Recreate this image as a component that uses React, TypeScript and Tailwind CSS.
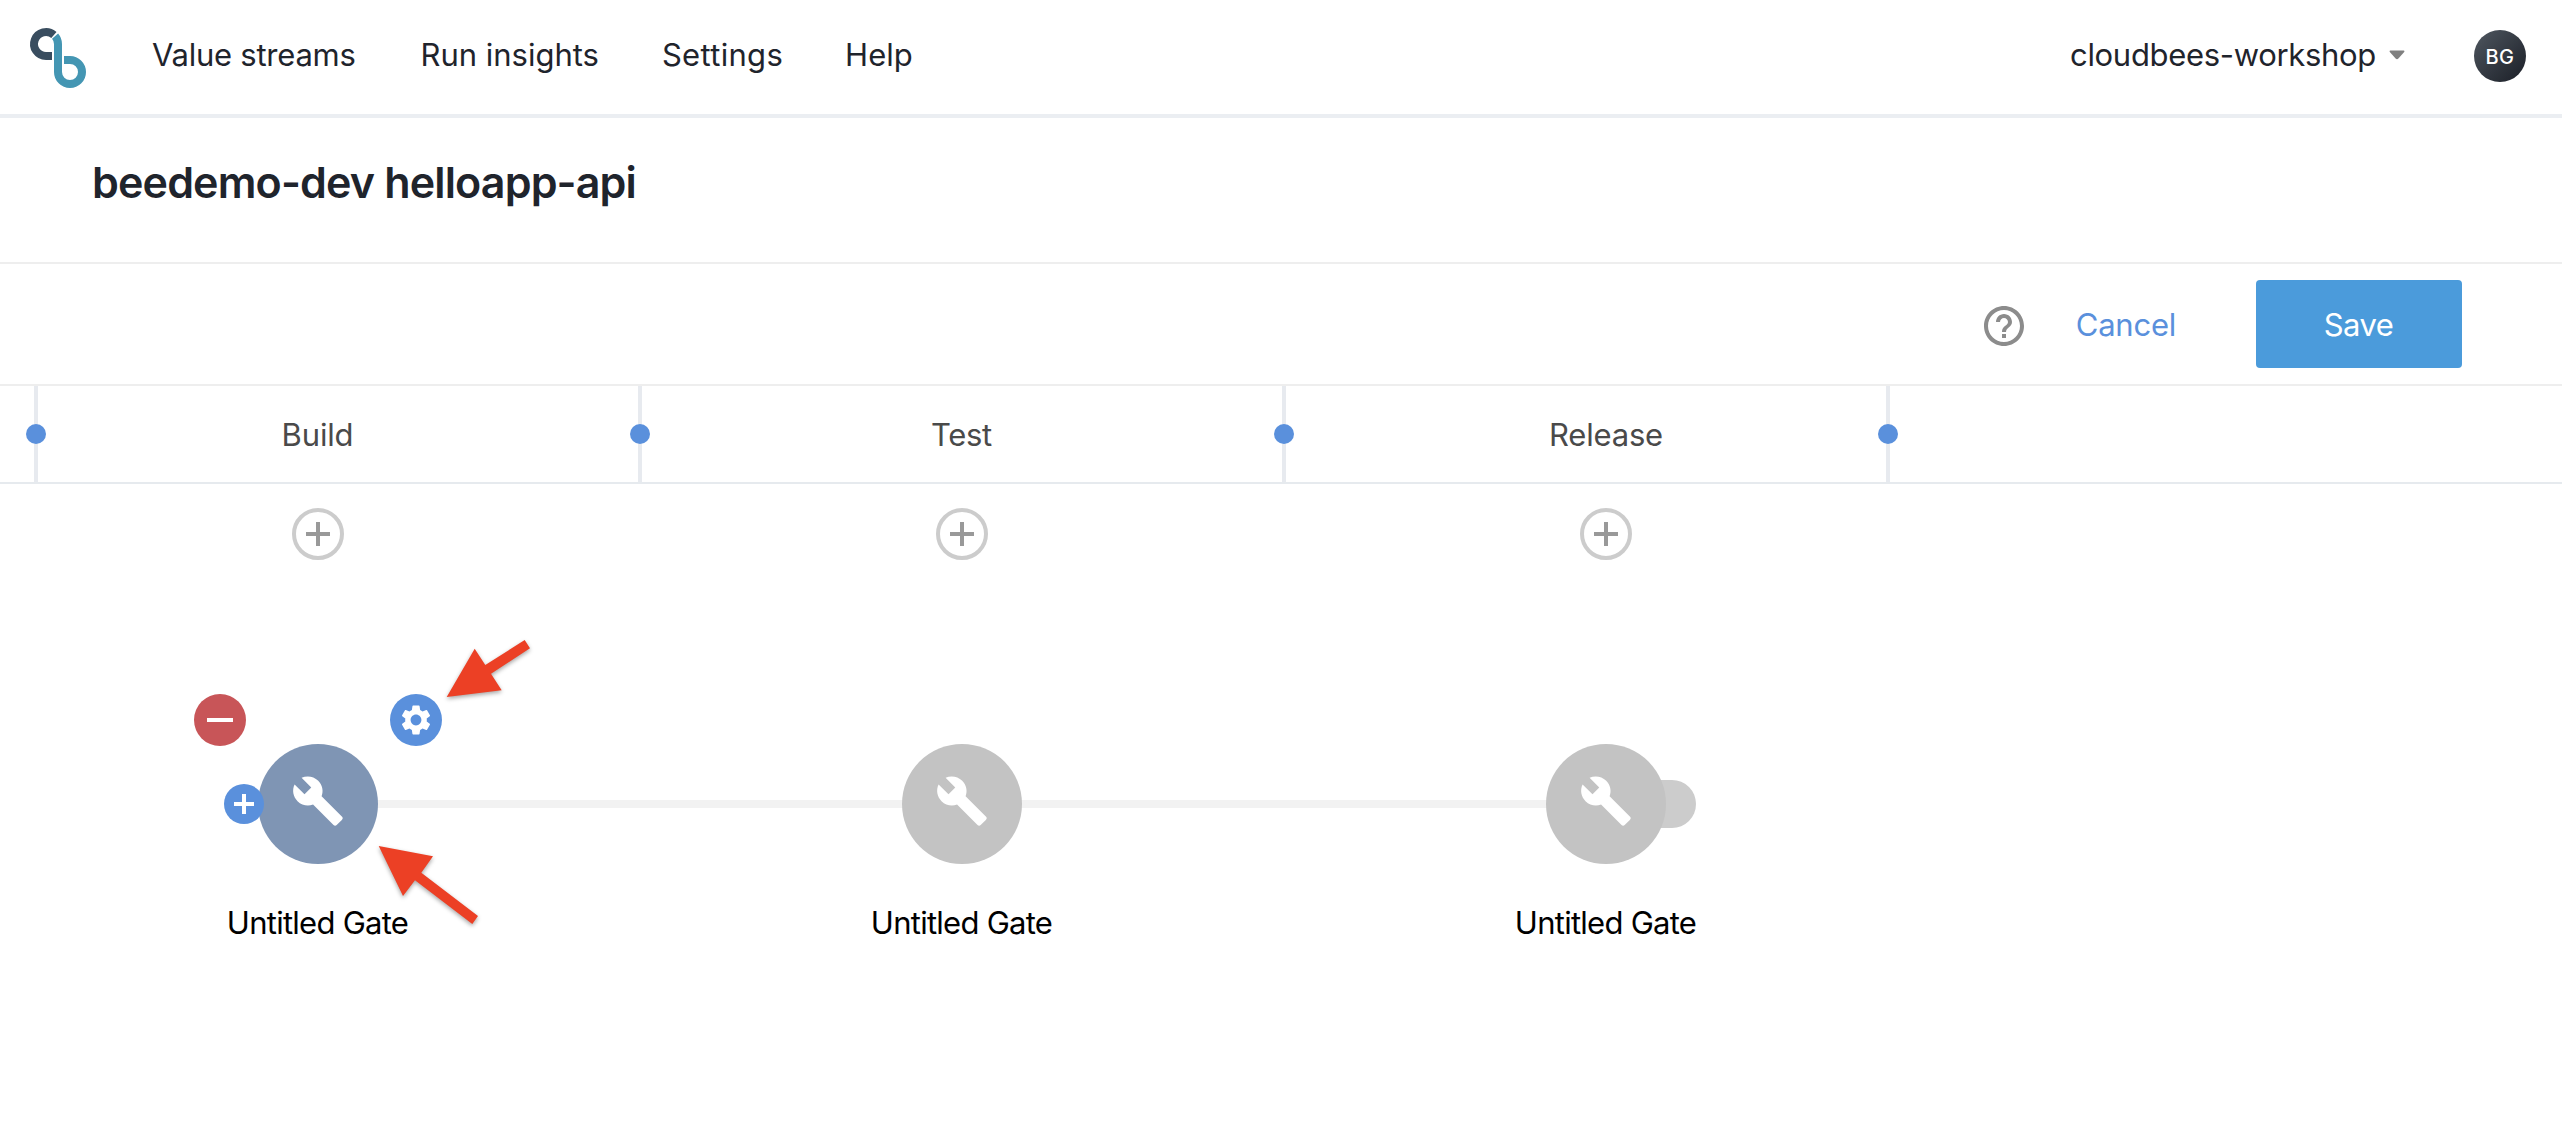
import { MdBuild, MdHelpOutline, MdSettings } from 'react-icons/md';

function Logo() {
  return (
    <svg viewBox="28 26 60 64" className="h-16 w-[60px] shrink-0" fill="none" strokeWidth="8">
      <path d="M52 56H46A12 12 0 1 1 53.9 34.95" stroke="#394d5f" />
      <path d="M64 60H70A12 12 0 1 1 58 72V44A12 12 0 0 0 55.06 36.13" stroke="#4496b3" />
    </svg>
  );
}

function Header() {
  return (
    <header className="flex h-[118px] items-center border-b-4 border-[#ebeef2] pl-7 pr-9 text-[31px] leading-[39px] text-[#1f242c]">
      <div className="mt-[2px]">
        <Logo />
      </div>
      <nav className="mb-[5px] ml-16 flex">
        <a className="mr-[65px] tracking-[-0.25px]">Value streams</a>
        <a className="mr-[63px] tracking-[-0.02px]">Run insights</a>
        <a className="mr-[62px] tracking-[0.311px]">Settings</a>
        <a className="tracking-[0.02px]">Help</a>
      </nav>
      <div className="mb-[5px] ml-auto flex items-center">
        <span className="tracking-[-0.318px]">cloudbees-workshop</span>
        <svg viewBox="0 0 16 10" className="ml-[13px] h-[10px] w-4" fill="#808080">
          <path d="M1.2 0.5H14.8Q16 0.8 15.2 2L9.4 8.6Q8 10 6.6 8.6L0.8 2Q0 0.8 1.2 0.5Z" />
        </svg>
      </div>
      <div className="mb-[2px] ml-[69px] flex size-[52px] items-center justify-center rounded-full bg-linear-to-br from-[#505861] to-[#1b1f27] text-[20px] font-medium leading-6 tracking-[0.4px] text-white">
        <span className="mt-px">BG</span>
      </div>
    </header>
  );
}

function Toolbar() {
  return (
    <div className="flex h-[122px] items-center justify-end border-b-2 border-[#eeeeee] pr-[100px] text-[31px] leading-[39px]">
      <MdHelpOutline className="mt-1 size-12 text-[#8c8c8c]" />
      <span className="ml-12 mt-px tracking-[-0.23px] text-[#5a90dc]">Cancel</span>
      <button className="ml-[80px] h-[88px] w-[206px] rounded-[4px] bg-[#4b9bdb] pr-px pt-px tracking-[-0.5px] text-white">
        Save
      </button>
    </div>
  );
}

function Divider({ side }: { side: string }) {
  return (
    <div className={`absolute inset-y-0 flex w-5 items-center justify-center ${side}`}>
      <div className="absolute inset-y-0 left-2 w-1 bg-[#e7eaef]" />
      <div className="relative size-5 rounded-full bg-[#5a90dc]" />
    </div>
  );
}

function StageHeader() {
  return (
    <div className="flex h-[98px] border-b-2 border-[#e6eaee] text-[31px] leading-[39px] text-[#4a4a4a]">
      <div className="-ml-1 flex">
        <div className="relative flex w-[644px] items-center justify-center">
          <Divider side="left-[30px]" />
          <span className="pr-px pt-px tracking-[-0.15px]">Build</span>
          <Divider side="-right-2.5" />
        </div>
        <div className="relative flex w-[644px] items-center justify-center">
          <span className="pr-px pt-px tracking-[-0.35px]">Test</span>
          <Divider side="-right-2.5" />
        </div>
        <div className="relative flex w-[644px] items-center justify-center">
          <span className="pt-px tracking-[-0.2px]">Release</span>
          <Divider side="right-[30px]" />
        </div>
      </div>
    </div>
  );
}

function Plus({ className }: { className: string }) {
  return (
    <svg viewBox="0 0 24 24" className={className} fill="currentColor">
      <rect x="10" width="4" height="24" />
      <rect y="10" width="24" height="4" />
    </svg>
  );
}

function Gate({ selected = false, linked = false, last = false }) {
  return (
    <div className="flex w-[644px] flex-col items-center">
      <div className="flex size-[52px] items-center justify-center rounded-full border-4 border-[#cccccc] text-[#999999]">
        <Plus className="size-6" />
      </div>
      <div className="relative mt-[184px] size-[120px]">
        {linked && <div className="absolute left-[60px] top-14 h-2 w-[644px] bg-[#f2f2f2]" />}
        {last && <div className="absolute left-[90px] top-9 h-12 w-[60px] rounded-r-full bg-[#cccccc]" />}
        <div
          className={`relative z-10 flex size-[120px] items-center justify-center rounded-full pb-[6px] pr-px text-white ${
            selected ? 'bg-[#7f95b4]' : 'bg-[#c3c3c3]'
          }`}
        >
          <MdBuild className="size-[54px]" />
        </div>
        {selected && (
          <>
            <div className="absolute -left-16 -top-[50px] z-10 flex size-[52px] items-center justify-center rounded-full bg-[#c85558]">
              <div className="h-1 w-[26px] bg-white" />
            </div>
            <div className="absolute -top-[50px] left-[132px] z-10 flex size-[52px] items-center justify-center rounded-full bg-[#5a90dc] text-white">
              <MdSettings className="size-9" />
            </div>
            <div className="absolute -left-[34px] top-10 z-10 flex size-10 items-center justify-center rounded-full bg-[#5a90dc]">
              <div className="absolute h-1 w-5 bg-white" />
              <div className="absolute h-5 w-1 bg-white" />
            </div>
            <svg
              viewBox="370 630 180 310"
              className="absolute -top-[114px] left-[112px] z-20 h-[310px] w-[180px] drop-shadow-[0_2px_2px_rgba(0,0,0,0.35)]"
              fill="#ec4025"
            >
              <path d="M446.7 697L474.7 648.7L485.3 665L524.7 640L530 648.3L491 673.7L501.7 690.3Z" />
              <path d="M378.7 846L433 856.3L421.3 872.7L478 916L472.3 924L415 880.3L403 896Z" />
            </svg>
          </>
        )}
      </div>
      <span className="relative z-10 mt-[39px] pr-px text-[31px] leading-[39px] tracking-[-0.74px] text-black">
        Untitled Gate
      </span>
    </div>
  );
}

export default function App() {
  return (
    <div className="h-[1124px] w-[2562px] overflow-hidden bg-white font-['Inter','Liberation_Sans',sans-serif]">
      <Header />
      <h1 className="h-[146px] border-b-2 border-[#eeeeee] pl-[92px] pt-[38px] text-[43px] font-semibold leading-[52px] tracking-[-0.85px] text-[#1f242c]">
        beedemo-dev helloapp-api
      </h1>
      <Toolbar />
      <StageHeader />
      <main className="-ml-1 flex pt-6">
        <Gate selected linked />
        <Gate linked />
        <Gate last />
      </main>
    </div>
  );
}
